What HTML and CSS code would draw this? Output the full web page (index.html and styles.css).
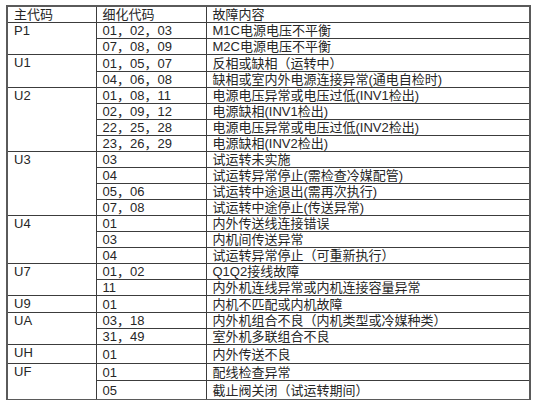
FILE: index.html
```html
<!DOCTYPE html>
<html lang="zh-CN">
<head>
<meta charset="utf-8">
<link rel="stylesheet" href="styles.css">
</head>
<body>
<table class="codes">
  <colgroup>
    <col class="c1"><col class="c2"><col class="c3">
  </colgroup>
  <thead>
    <tr class="head"><th>主代码</th><th>细化代码</th><th>故障内容</th></tr>
  </thead>
  <tbody>
    <tr><td class="main" rowspan="2">P1</td><td>01，02，03</td><td>M1C电源电压不平衡</td></tr>
    <tr class="h15"><td>07，08，09</td><td>M2C电源电压不平衡</td></tr>
    <tr class="h17"><td class="main" rowspan="2">U1</td><td>01，05，07</td><td>反相或缺相（运转中）</td></tr>
    <tr><td>04，06，08</td><td>缺相或室内外电源连接异常(通电自检时)</td></tr>
    <tr><td class="main" rowspan="4">U2</td><td>01，08，11</td><td>电源电压异常或电压过低(INV1检出)</td></tr>
    <tr><td>02，09，12</td><td>电源缺相(INV1检出)</td></tr>
    <tr><td>22，25，28</td><td>电源电压异常或电压过低(INV2检出)</td></tr>
    <tr class="h15"><td>23，26，29</td><td>电源缺相(INV2检出)</td></tr>
    <tr><td class="main" rowspan="4">U3</td><td>03</td><td>试运转未实施</td></tr>
    <tr><td>04</td><td>试运转异常停止(需检查冷媒配管)</td></tr>
    <tr><td>05，06</td><td>试运转中途退出(需再次执行)</td></tr>
    <tr class="h15"><td>07，08</td><td>试运转中途停止(传送异常)</td></tr>
    <tr><td class="main" rowspan="3">U4</td><td>01</td><td>内外传送线连接错误</td></tr>
    <tr><td>03</td><td>内机间传送异常</td></tr>
    <tr><td>04</td><td>试运转异常停止（可重新执行）</td></tr>
    <tr><td class="main" rowspan="2">U7</td><td>01，02</td><td>Q1Q2接线故障</td></tr>
    <tr class="h15"><td>11</td><td>内外机连线异常或内机连接容量异常</td></tr>
    <tr class="h17"><td class="main">U9</td><td>01</td><td>内机不匹配或内机故障</td></tr>
    <tr><td class="main" rowspan="2">UA</td><td>03，18</td><td>内外机组合不良（内机类型或冷媒种类）</td></tr>
    <tr><td>31，49</td><td>室外机多联组合不良</td></tr>
    <tr class="h19"><td class="main">UH</td><td>01</td><td>内外传送不良</td></tr>
    <tr class="h17"><td class="main" rowspan="2">UF</td><td>01</td><td>配线检查异常</td></tr>
    <tr class="h19"><td>05</td><td>截止阀关闭（试运转期间）</td></tr>
  </tbody>
</table>
</body>
</html>
```

FILE: styles.css
```css
html, body {
  margin: 0;
  padding: 0;
  background: #ffffff;
}

body {
  padding: 5px 0 0 6px;
  font-family: "Liberation Sans", "Noto Sans CJK SC", sans-serif;
  font-size: 13px;
  color: #262626;
}

.codes {
  border-collapse: collapse;
  table-layout: fixed;
  width: 523px;
  border: 2px solid #5a5a5a;
}

.c1 { width: 89px; }
.c2 { width: 110px; }
.c3 { width: 324px; }

.codes th,
.codes td {
  border: 1px solid #3c3c3c;
  padding: 0 6px;
  height: 15px;
  line-height: 15px;
  text-align: left;
  font-weight: normal;
  white-space: nowrap;
  overflow: hidden;
  vertical-align: middle;
}

.codes td.main {
  vertical-align: top;
}

.codes tr.h15 td { height: 14px; }
.codes tr.h17 td { height: 16px; }
.codes tr.h19 td { height: 18px; }
.codes tr.h15 td.main,
.codes tr.h17 td.main,
.codes tr.h19 td.main { height: auto; }
```
